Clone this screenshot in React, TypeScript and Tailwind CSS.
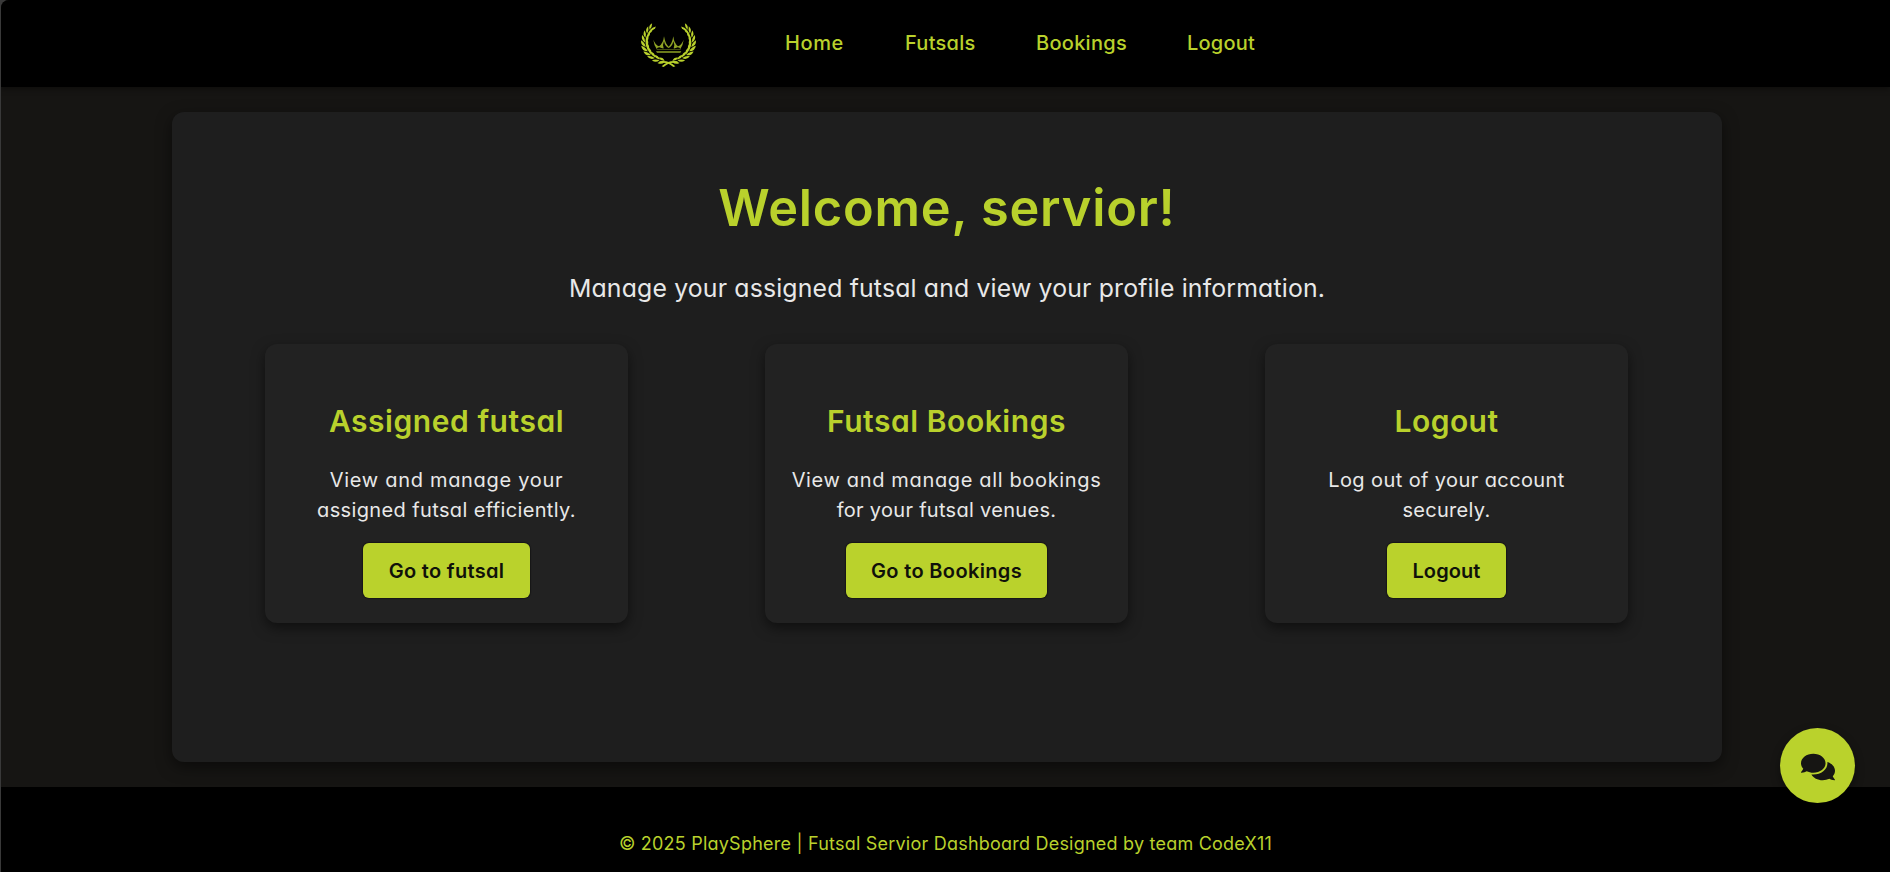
import { FaComments } from "react-icons/fa";

const LEAF_ANGLES = [100, 113, 126, 139, 152, 165, 178, 191, 204, 216];

function Wreath() {
  return (
    <g fill="#b9d12c">
      {LEAF_ANGLES.map((deg, i) => {
        const a = (deg * Math.PI) / 180;
        const x = 146 + 70 * Math.cos(a);
        const y = 98 + 60 * Math.sin(a);
        const dir = (Math.atan2(60 * Math.cos(a), -70 * Math.sin(a)) * 180) / Math.PI;
        const s = 1.02 - Math.abs(i - 4) * 0.04;
        return (
          <g key={deg} transform={`translate(${x} ${y}) rotate(${dir}) scale(${s})`}>
            <path d="M0 1Q14 0 24 9Q8 15 0 1Z" />
            <path d="M0 -1Q14 0 24 -9Q8 -15 0 -1Z" />
          </g>
        );
      })}
      <path d="M118 157Q145 152 166 172L160 174Q143 158 120 162Z" />
    </g>
  );
}

function Logo() {
  return (
    <svg className="mt-[3px] h-[46px] w-[57px] shrink-0" viewBox="60 39 171 138">
      <Wreath />
      <g transform="translate(291 0) scale(-1 1)">
        <Wreath />
      </g>
      <g fill="#8fa325">
        <path d="M100 92Q106 107 117 112Q130 103 132 82Q136 105 146 113Q156 105 160 82Q162 103 174 112Q185 107 191 92Q189 109 181 120Q179 116 173 115Q165 119 161 118Q165 107 160 97Q157 113 146 117Q135 113 132 97Q127 107 131 118Q127 119 118 115Q112 116 110 120Q102 109 100 92Z" />
        <path d="M109 121H183L181 123H111Z" opacity="0.6" />
        <path d="M108 127H184L181 131H111Z" />
      </g>
    </svg>
  );
}

const links = [
  { label: "Home", cls: "w-[59px] tracking-[0.6px]" },
  { label: "Futsals", cls: "w-[70px] tracking-[0.25px]" },
  { label: "Bookings", cls: "w-[90px] tracking-[0.28px]" },
  { label: "Logout", cls: "w-[69px] tracking-[0.2px]" },
];

const cards = [
  {
    title: "Assigned futsal",
    titleCls: "tracking-[0.55px]",
    lines: [
      { text: "View and manage your", cls: "tracking-[0.7px]" },
      { text: "assigned futsal efficiently.", cls: "tracking-[0.37px]" },
    ],
    action: "Go to futsal",
    actionCls: "w-[167px] tracking-[0.3px]",
  },
  {
    title: "Futsal Bookings",
    titleCls: "tracking-[0.55px]",
    lines: [
      { text: "View and manage all bookings", cls: "tracking-[0.65px]" },
      { text: "for your futsal venues.", cls: "tracking-[0.3px]" },
    ],
    action: "Go to Bookings",
    actionCls: "w-[201px] tracking-[0.35px]",
  },
  {
    title: "Logout",
    titleCls: "tracking-[0.45px]",
    lines: [
      { text: "Log out of your account", cls: "tracking-[0.4px]" },
      { text: "securely.", cls: "tracking-[0.3px]" },
    ],
    action: "Logout",
    actionCls: "w-[119px] tracking-[0.1px]",
  },
];

export default function App() {
  return (
    <div className="h-[872px] overflow-hidden bg-[#393939] pl-px font-['Inter',sans-serif] [font-feature-settings:'cv11'_1]">
      <div className="flex h-full flex-col overflow-hidden rounded-tl-[8px] bg-[#161513]">
        <header className="z-10 flex h-[87px] shrink-0 items-center justify-center bg-black pl-[5px] shadow-[0_2px_6px_rgba(0,0,0,0.4)]">
          <Logo />
          <nav className="mb-[2px] ml-[88px] flex gap-[61px] text-[20px] font-medium text-[#b9d12c]">
            {links.map((l) => (
              <a key={l.label} className={`whitespace-nowrap ${l.cls}`}>
                {l.label}
              </a>
            ))}
          </nav>
        </header>

        <main className="mt-[25px] ml-[171px] flex h-[650px] w-[1550px] shrink-0 flex-col items-center rounded-[12px] bg-[#1e1e1e] shadow-[0_5px_15px_rgba(0,0,0,0.5)]">
          <h1 className="mt-[59px] h-[74px] text-[50.5px] leading-[74px] font-semibold tracking-[0.8px] text-[#b9d12c]">
            Welcome, servior!
          </h1>
          <p className="mt-[24px] h-[38px] text-[24.8px] leading-[38px] tracking-[0.17px] text-[#e8e8e8]">
            Manage your assigned futsal and view your profile information.
          </p>
          <div className="mt-[37px] mr-[1px] flex w-[1363px] justify-between">
            {cards.map((c) => (
              <section
                key={c.title}
                className="flex h-[279px] w-[363px] flex-col items-center rounded-[12px] bg-[#222] shadow-[0_5px_13px_rgba(0,0,0,0.5)]"
              >
                <h2
                  className={`mt-[55px] h-[44px] text-[30px] leading-[44px] font-semibold text-[#b9d12c] ${c.titleCls}`}
                >
                  {c.title}
                </h2>
                <p className="mt-[22px] text-center text-[20px] leading-[30px] text-[#e8e8e8]">
                  {c.lines.map((l) => (
                    <span key={l.text} className={`block whitespace-nowrap ${l.cls}`}>
                      {l.text}
                    </span>
                  ))}
                </p>
                <button
                  className={`mt-[18px] h-[55px] rounded-[6px] bg-[#bad22c] pt-[1px] text-[20px] font-semibold text-[#10110a] shadow-[0_0_1px_1px_rgba(0,0,0,0.35)] ${c.actionCls}`}
                >
                  {c.action}
                </button>
              </section>
            ))}
          </div>
        </main>

        <footer className="mt-[25px] flex h-[85px] shrink-0 justify-center bg-black pt-[43px] text-[18px] leading-[27px] tracking-[0.22px] text-[#b9d12c]">
          © 2025 PlaySphere | Futsal Servior Dashboard Designed by team CodeX11
        </footer>
      </div>

      <button className="fixed top-[728px] left-[1780px] z-20 flex size-[75px] items-center justify-center rounded-full bg-[#bad22c] shadow-[0_4px_10px_rgba(0,0,0,0.4)]">
        <FaComments className="mt-[2px] size-[34px] text-[#161513]" />
      </button>
    </div>
  );
}
